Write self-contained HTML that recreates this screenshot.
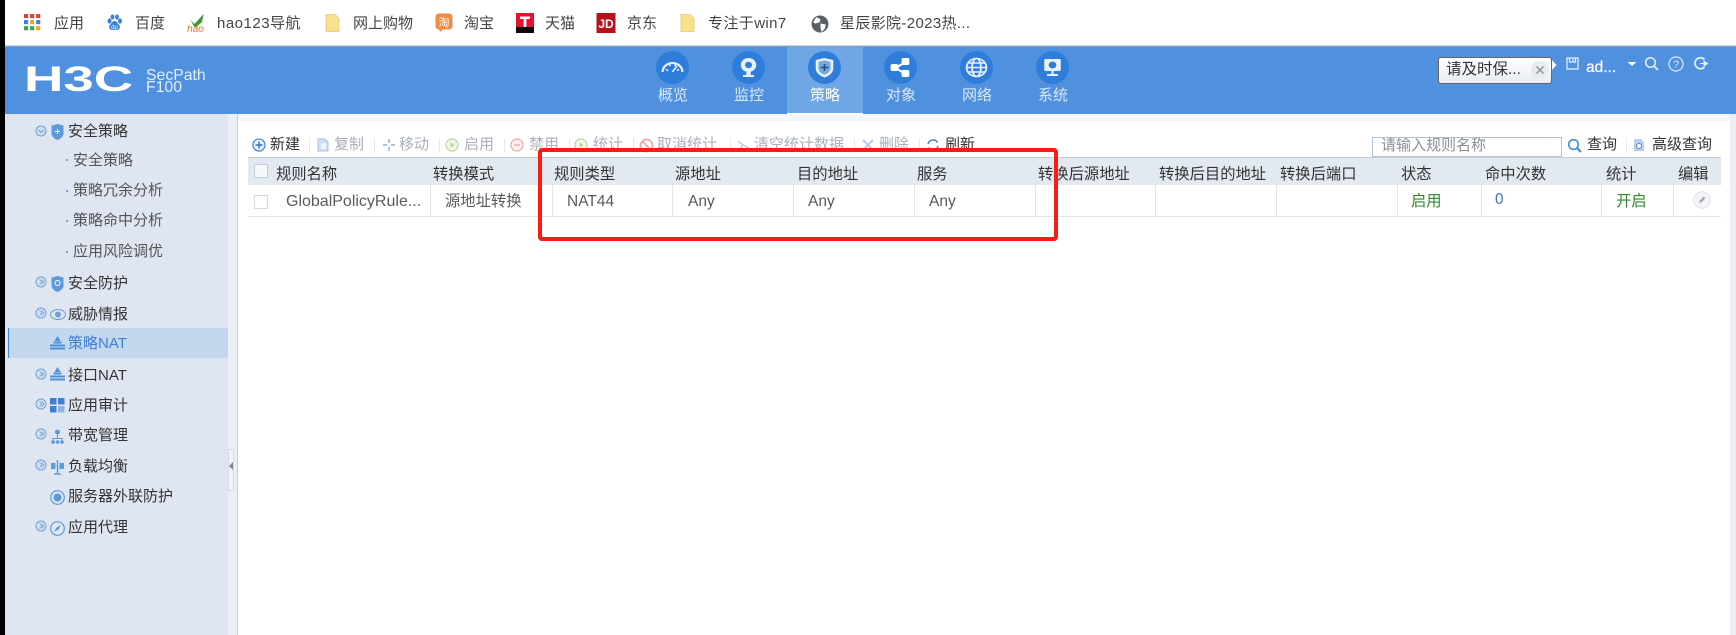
<!DOCTYPE html>
<html lang="zh"><head><meta charset="utf-8"><title>H3C SecPath F100</title>
<style>
html,body{margin:0;padding:0;width:1736px;height:635px;overflow:hidden;background:#fff}
body{position:relative;font-family:"Liberation Sans","Noto Sans CJK SC",sans-serif}
.a,.t,.s,svg{position:absolute}
.a{display:block}
.t{white-space:nowrap;line-height:20px;margin-top:-10px}
.bm{font-size:15px;color:#444;}
.n{font-size:15px;color:#dbe8f8;transform:translateX(-50%);top:96px}
.s{white-space:nowrap;line-height:20px;margin-top:-10px;font-size:15px;color:#333}
.sub{color:#555}
.tb{font-size:15px;color:#aab0b8;top:145px}
.h{font-size:15.3px;color:#333;top:175px}
.r{font-size:15.3px;color:#5a5a5a;top:202px}
.d{position:absolute;top:185px;height:31px;width:1px;background:#e2e5e9}
.sp{position:absolute;top:138px;height:15px;width:1px;background:#e6e8ea}
</style></head><body>
<div class="a" style="left:0;top:0;width:5px;height:635px;background:#000"></div>

<!-- bookmarks -->
<svg style="left:24px;top:14px" width="17" height="17" viewBox="0 0 14 14"><g><rect x="0" y="0" width="3.4" height="3.4" fill="#d8433a"/><rect x="5" y="0" width="3.4" height="3.4" fill="#d8433a"/><rect x="10" y="0" width="3.4" height="3.4" fill="#d8433a"/><rect x="0" y="5" width="3.4" height="3.4" fill="#3f7fe0"/><rect x="5" y="5" width="3.4" height="3.4" fill="#e8a822"/><rect x="10" y="5" width="3.4" height="3.4" fill="#3f7fe0"/><rect x="0" y="10" width="3.4" height="3.4" fill="#3da14f"/><rect x="5" y="10" width="3.4" height="3.4" fill="#3da14f"/><rect x="10" y="10" width="3.4" height="3.4" fill="#e8a822"/></g></svg>
<span class="t bm" style="left:54px;top:24px">应用</span>
<svg style="left:106px;top:14px" width="17" height="18" viewBox="0 0 16 18"><g fill="#3d80d8"><ellipse cx="3" cy="7" rx="2" ry="2.6"/><ellipse cx="6" cy="3" rx="1.9" ry="2.6"/><ellipse cx="10.5" cy="3" rx="1.9" ry="2.6"/><ellipse cx="13.5" cy="7" rx="2" ry="2.6"/><path d="M8 7c-2.5 0-3 2.6-4.6 4-1.5 1.4-.8 5 2 5 1 0 1.700-.4 2.600-.4s1.700.4 2.600.4c2.800 0 3.500-3.600 2-5C11 9.600 10.500 7 8 7z"/></g><text x="8" y="15" font-size="6" fill="#fff" text-anchor="middle" font-family="Liberation Sans">du</text></svg>
<span class="t bm" style="left:135px;top:24px">百度</span>
<svg style="left:186px;top:13px" width="20" height="20" viewBox="0 0 19 20"><path d="M4 7l4 4 9-10-1.500 8-7 6z" fill="#3f9a2e"/><text x="9" y="19" font-size="10" font-style="italic" fill="#e8761e" text-anchor="middle" font-family="Liberation Sans">hao</text></svg>
<span class="t bm" style="left:217px;top:24px;letter-spacing:.5px">hao123导航</span>
<svg style="left:325px;top:14px" width="15" height="18" viewBox="0 0 14 18"><path d="M.5.5h9l4 4v13H.5z" fill="#fbe08e" stroke="#e8cf86"/></svg>
<span class="t bm" style="left:353px;top:24px">网上购物</span>
<svg style="left:434px;top:13px" width="20" height="20" viewBox="0 0 18 20"><rect x="0.500" y="0.500" width="17" height="16" rx="3.500" fill="#f08b45"/><path d="M4 16l1 3 3-3z" fill="#f08b45"/><text x="9" y="13" font-size="11" fill="#fff" text-anchor="middle" font-family="Noto Sans CJK SC">淘</text></svg>
<span class="t bm" style="left:464px;top:24px">淘宝</span>
<svg style="left:515px;top:13px" width="20" height="20" viewBox="0 0 18 20"><rect width="18" height="14" fill="#e8102a"/><rect y="14" width="18" height="6" fill="#0a0a0a"/><path d="M4 3.500h10v2.500h-3.600v8H7.600V6H4z" fill="#fff"/></svg>
<span class="t bm" style="left:545px;top:24px">天猫</span>
<svg style="left:596px;top:13px" width="20" height="20" viewBox="0 0 19 20"><rect width="19" height="20" fill="#b5121b"/><text x="9.500" y="15" font-size="12" font-weight="bold" fill="#fff" text-anchor="middle" font-family="Liberation Sans">JD</text></svg>
<span class="t bm" style="left:627px;top:24px">京东</span>
<svg style="left:680px;top:14px" width="15" height="18" viewBox="0 0 14 18"><path d="M.5.5h9l4 4v13H.5z" fill="#fbe08e" stroke="#e8cf86"/></svg>
<span class="t bm" style="left:708px;top:24px;letter-spacing:.4px">专注于win7</span>
<svg style="left:811px;top:15px" width="18" height="18" viewBox="0 0 17 17"><circle cx="8.500" cy="8.500" r="8" fill="#5b5f66"/><path d="M5 2l4 2-1 3-4 1-2-1zM9 8l5 1-1 4-3 3-1-4z" fill="#fff"/></svg>
<span class="t bm" style="left:840px;top:24px;letter-spacing:.35px">星辰影院-2023热...</span>

<!-- header -->
<div class="a" style="left:5px;top:45px;width:1731px;height:1px;background:#c5d5e8"></div>
<div class="a" style="left:5px;top:46px;width:1731px;height:1px;background:#7f9fc8"></div>
<div class="a" style="left:5px;top:47px;width:1731px;height:67px;background:#4f91de"></div>
<div class="a" style="left:787px;top:47px;width:76px;height:66px;background:#6fa6e5"></div>
<div class="a" style="left:787px;top:113px;width:76px;height:3px;background:#fff"></div>

<span class="t" style="left:24px;top:80px;margin-top:-21px;line-height:42px;font-size:35px;font-weight:bold;color:#fff;transform:scaleX(1.56);transform-origin:left center">H3C</span>
<span class="t" style="left:146px;top:76px;font-size:15.800px;color:#e4eefa">SecPath</span>
<span class="t" style="left:146px;top:88px;font-size:15.800px;color:#e4eefa">F100</span>

<!-- nav icons -->
<svg style="left:656px;top:51px" width="33" height="33" viewBox="0 0 30 33" preserveAspectRatio="none"><ellipse cx="15" cy="16.500" rx="15" ry="16.500" fill="#2f7ddb"/><path d="M6 21a9 9 0 1 1 18 0" fill="none" stroke="#e8f1fb" stroke-width="2"/><path d="M9 18.500l2 1M12 13l1 2M18 13l-1 2M21 18.500l-2 1M15 21l4-6" stroke="#e8f1fb" stroke-width="1.500" fill="none"/></svg>
<svg style="left:732px;top:51px" width="33" height="33" viewBox="0 0 30 33" preserveAspectRatio="none"><ellipse cx="15" cy="16.500" rx="15" ry="16.500" fill="#2f7ddb"/><circle cx="15" cy="14" r="7" fill="#e8f1fb"/><circle cx="15" cy="14" r="3.200" fill="#2f7ddb"/><path d="M10 24h10v2H10z" fill="#e8f1fb"/><path d="M13 21h4v3h-4z" fill="#e8f1fb"/></svg>
<svg style="left:808px;top:51px" width="33" height="33" viewBox="0 0 30 33" preserveAspectRatio="none"><ellipse cx="15" cy="16.500" rx="15" ry="16.500" fill="#2f7ddb"/><path d="M15 7l8 2v8c0 5-4 8-8 9.500-4-1.500-8-4.500-8-9.500V9z" fill="#e8f1fb"/><path d="M15 9.500l5.500 1.300v6.200c0 3.500-2.700 5.700-5.500 6.800-2.800-1.100-5.500-3.300-5.500-6.800v-6.200z" fill="#7aa9df"/><path d="M15 13v7M11.500 16.500h7" stroke="#1c4f8f" stroke-width="1.500"/></svg>
<svg style="left:884px;top:51px" width="33" height="33" viewBox="0 0 30 33" preserveAspectRatio="none"><ellipse cx="15" cy="16.500" rx="15" ry="16.500" fill="#2f7ddb"/><path d="M19 11l-8 6 8 6" fill="none" stroke="#fff" stroke-width="2"/><rect x="16" y="7" width="7" height="7" rx="1.500" fill="#fff"/><rect x="6" y="13" width="7" height="7" rx="1.500" fill="#fff"/><rect x="16" y="19" width="7" height="7" rx="1.500" fill="#fff"/></svg>
<svg style="left:960px;top:51px" width="33" height="33" viewBox="0 0 30 33" preserveAspectRatio="none"><ellipse cx="15" cy="16.500" rx="15" ry="16.500" fill="#2f7ddb"/><g fill="none" stroke="#e8f1fb" stroke-width="1.600"><circle cx="15" cy="16.500" r="9"/><ellipse cx="15" cy="16.500" rx="4" ry="9"/><path d="M6 16.500h18M7.500 12h15M7.500 21h15"/></g></svg>
<svg style="left:1036px;top:51px" width="33" height="33" viewBox="0 0 30 33" preserveAspectRatio="none"><ellipse cx="15" cy="16.500" rx="15" ry="16.500" fill="#2f7ddb"/><rect x="7.500" y="8" width="15" height="12" rx="1" fill="#e8f1fb"/><circle cx="15" cy="14" r="3.500" fill="#2f7ddb"/><path d="M15 20v3M10 24h10" stroke="#e8f1fb" stroke-width="2"/></svg>
<span class="t n" style="left:673px">概览</span>
<span class="t n" style="left:749px">监控</span>
<span class="t n" style="left:825px;color:#fff">策略</span>
<span class="t n" style="left:901px">对象</span>
<span class="t n" style="left:977px">网络</span>
<span class="t n" style="left:1053px">系统</span>

<!-- tooltip & user -->
<div class="a" style="left:1438px;top:57px;width:112px;height:25px;background:linear-gradient(#fff,#e9ecf4);border:1px solid #6b6460;border-radius:3px"></div>
<svg style="left:1552px;top:60px" width="5" height="10" viewBox="0 0 5 10"><path d="M0 0l4.500 5L0 10z" fill="#f4f6fb"/></svg>
<span class="t" style="left:1446px;top:70px;font-size:15.500px;color:#333">请及时保...</span>
<div class="a" style="left:1531px;top:61px;width:18px;height:18px;border-radius:50%;background:#e8eaf0"></div>
<svg style="left:1535px;top:65px" width="10" height="10" viewBox="0 0 10 10"><path d="M1.500 1.500l7 7M8.500 1.500l-7 7" stroke="#8d929b" stroke-width="1.500"/></svg>
<svg style="left:1566px;top:57px" width="13" height="13" viewBox="0 0 13 13"><path d="M1 1h11v11H1zM3.500 1v4h6V1M7 2v2" fill="none" stroke="#eaf2fc" stroke-width="1.200"/></svg>
<span class="t" style="left:1586px;top:68px;font-size:15.500px;color:#fff;-webkit-text-stroke:.2px #fff">ad...</span>
<svg style="left:1627px;top:62px" width="10" height="4" viewBox="0 0 11 5"><path d="M0 0h11L5.500 5z" fill="#fff"/></svg>
<svg style="left:1644px;top:56px" width="15" height="15" viewBox="0 0 15 15"><circle cx="6.500" cy="6.500" r="4.800" fill="none" stroke="#e6f0fb" stroke-width="1.500"/><path d="M10 10l4 4" stroke="#e6f0fb" stroke-width="1.800"/></svg>
<svg style="left:1668px;top:56px" width="16" height="16" viewBox="0 0 16 16"><circle cx="8" cy="8" r="7" fill="none" stroke="#dbe8f8" stroke-width="1.200"/><text x="8" y="12" font-size="11" fill="#dbe8f8" text-anchor="middle" font-family="Liberation Sans">?</text></svg>
<svg style="left:1692px;top:56px" width="17" height="15" viewBox="0 0 17 15"><path d="M12.500 3.500A5.500 5.500 0 1 0 12.500 11" fill="none" stroke="#e6f0fb" stroke-width="1.700"/><path d="M8 7.500h5M12 5l3.500 2.500L12 10z" fill="#e6f0fb" stroke="#e6f0fb" stroke-width="1"/></svg>

<!-- sidebar -->
<div class="a" style="left:5px;top:114px;width:223px;height:521px;background:#e0e6f1"></div>
<div class="a" style="left:228px;top:114px;width:9px;height:521px;background:#eaeef5"></div>
<div class="a" style="left:237px;top:114px;width:1px;height:521px;background:#c9ced6"></div>
<div class="a" style="left:1730px;top:114px;width:6px;height:521px;background:#eceef2"></div>
<div class="a" style="left:238px;top:114px;width:1492px;height:7px;background:#f3f5f8"></div>
<div class="a" style="left:8px;top:328px;width:220px;height:30px;background:#c3d7ef"></div>
<div class="a" style="left:8px;top:328px;width:1px;height:30px;background:#3f86d8"></div>
<div class="a" style="left:228px;top:449px;width:4px;height:40px;background:#f2f4f8;border:1px solid #d5d9e0"></div>
<svg style="left:229px;top:462px" width="4" height="8" viewBox="0 0 4 8"><path d="M4 0v8L0 4z" fill="#7f8792"/></svg>

<svg width="0" height="0" style="left:0;top:0"><defs>
<g id="ex"><circle cx="6" cy="6" r="5" fill="#d3e0f0" stroke="#6ba0d8" stroke-width="1"/><path d="M4.500 3.500L7 6 4.500 8.500M6.500 3.500L9 6 6.500 8.500" fill="none" stroke="#6ba0d8" stroke-width=".8"/></g>
<g id="nat"><path d="M7.500 0l3 5h-6z" fill="#4d8fd8"/><rect x="3.500" y="5.500" width="8" height="2" fill="#4d8fd8"/><rect x="0" y="8.500" width="15" height="2" fill="#4d8fd8"/><rect x="0" y="11.500" width="15" height="2" fill="#4d8fd8"/></g>
</defs></svg>

<svg style="left:35px;top:125px" width="12" height="12"><circle cx="6" cy="6" r="5" fill="#d3e0f0" stroke="#6ba0d8"/><path d="M3.500 5L6 7.500 8.500 5" fill="none" stroke="#6ba0d8"/></svg>
<svg style="left:51px;top:124px" width="13" height="16" viewBox="0 0 13 16"><path d="M.5 1.500L6.500 0l6 1.500v8c0 3-3 5.500-6 6.500-3-1-6-3.500-6-6.500z" fill="#5d9ad9"/><path d="M6.500 5v5M4 7.500h5" stroke="#fff"/></svg>
<span class="s" style="left:68px;top:132px">安全策略</span>
<span class="s sub" style="left:73px;top:161px">安全策略</span>
<span class="s sub" style="left:73px;top:191px">策略冗余分析</span>
<span class="s sub" style="left:73px;top:221px">策略命中分析</span>
<span class="s sub" style="left:73px;top:252px">应用风险调优</span>
<div class="a" style="left:66px;top:159px;width:2px;height:2px;background:#8aa0b8"></div>
<div class="a" style="left:66px;top:190px;width:2px;height:2px;background:#8aa0b8"></div>
<div class="a" style="left:66px;top:220px;width:2px;height:2px;background:#8aa0b8"></div>
<div class="a" style="left:66px;top:251px;width:2px;height:2px;background:#8aa0b8"></div>

<svg style="left:35px;top:276px" width="12" height="12"><use href="#ex"/></svg>
<svg style="left:51px;top:276px" width="13" height="16" viewBox="0 0 13 16"><path d="M.5 1.500L6.500 0l6 1.500v8c0 3-3 5.500-6 6.500-3-1-6-3.500-6-6.500z" fill="#5d9ad9"/><circle cx="6.500" cy="7" r="2.500" fill="none" stroke="#fff"/></svg>
<span class="s" style="left:68px;top:284px">安全防护</span>

<svg style="left:35px;top:307px" width="12" height="12"><use href="#ex"/></svg>
<svg style="left:50px;top:309px" width="16" height="11" viewBox="0 0 16 11"><ellipse cx="8" cy="5.500" rx="7.500" ry="5" fill="none" stroke="#6f9fd4"/><circle cx="8" cy="5.500" r="3" fill="#6f9fd4"/></svg>
<span class="s" style="left:68px;top:315px">威胁情报</span>

<svg style="left:50px;top:336px" width="15" height="14"><use href="#nat"/></svg>
<span class="s" style="left:68px;top:344px;color:#3f7fd0">策略NAT</span>

<svg style="left:35px;top:368px" width="12" height="12"><use href="#ex"/></svg>
<svg style="left:50px;top:367px" width="15" height="14"><use href="#nat"/></svg>
<span class="s" style="left:68px;top:376px">接口NAT</span>

<svg style="left:35px;top:398px" width="12" height="12"><use href="#ex"/></svg>
<svg style="left:50px;top:398px" width="15" height="15" viewBox="0 0 15 15"><rect width="6.500" height="6.500" fill="#3f7fd0"/><rect x="8" width="6.500" height="6.500" fill="#3f7fd0"/><rect y="8" width="6.500" height="6.500" fill="#3f7fd0"/><rect x="8" y="8" width="6.500" height="6.500" fill="#8fb4e0"/></svg>
<span class="s" style="left:68px;top:406px">应用审计</span>

<svg style="left:35px;top:428px" width="12" height="12"><use href="#ex"/></svg>
<svg style="left:51px;top:429px" width="13" height="15" viewBox="0 0 13 15"><circle cx="6.500" cy="3" r="2.500" fill="#5d9ad9"/><path d="M6.500 5v4M2 13v-3.500h9V13" fill="none" stroke="#5d9ad9"/><circle cx="2" cy="13" r="1.800" fill="#5d9ad9"/><circle cx="6.500" cy="13" r="1.800" fill="#5d9ad9"/><circle cx="11" cy="13" r="1.800" fill="#5d9ad9"/></svg>
<span class="s" style="left:68px;top:436px">带宽管理</span>

<svg style="left:35px;top:459px" width="12" height="12"><use href="#ex"/></svg>
<svg style="left:51px;top:460px" width="13" height="15" viewBox="0 0 13 15"><path d="M6.500 0v14M3 14h7" stroke="#5d9ad9" stroke-width="1.500"/><rect x="0" y="3" width="4.500" height="6" fill="#5d9ad9"/><rect x="8.500" y="3" width="4.500" height="6" fill="#5d9ad9"/></svg>
<span class="s" style="left:68px;top:467px">负载均衡</span>

<svg style="left:50px;top:490px" width="15" height="15" viewBox="0 0 15 15"><circle cx="7.500" cy="7.500" r="6.800" fill="none" stroke="#5d9ad9" stroke-width="1.200"/><circle cx="7.500" cy="7.500" r="4" fill="#5d9ad9"/></svg>
<span class="s" style="left:68px;top:497px">服务器外联防护</span>

<svg style="left:35px;top:520px" width="12" height="12"><use href="#ex"/></svg>
<svg style="left:50px;top:521px" width="15" height="15" viewBox="0 0 15 15"><circle cx="7.500" cy="7.500" r="6.800" fill="none" stroke="#5d9ad9" stroke-width="1.200"/><path d="M11 4L8.500 8.500 4 11l2.500-4.500z" fill="#5d9ad9"/></svg>
<span class="s" style="left:68px;top:528px">应用代理</span>

<!-- toolbar -->
<svg style="left:252px;top:138px" width="14" height="14" viewBox="0 0 14 14"><circle cx="7" cy="7" r="6" fill="#eaf2fb" stroke="#4a8ad6" stroke-width="1.300"/><path d="M7 3.500v7M3.500 7h7" stroke="#2f72c4" stroke-width="1.500"/></svg>
<span class="t tb" style="left:270px;color:#333">新建</span>
<div class="sp" style="left:309px"></div>
<svg style="left:317px;top:138px" width="13" height="14" viewBox="0 0 13 14"><path d="M1 1h7l3 3v9H1z" fill="#cfdef0" stroke="#a9c2de"/><rect x="4" y="5" width="5" height="6" fill="#eef4fb"/></svg>
<span class="t tb" style="left:334px">复制</span>
<div class="sp" style="left:374px"></div>
<svg style="left:382px;top:138px" width="14" height="14" viewBox="0 0 14 14"><path d="M7 1v4M7 9v4M1 7h4M9 7h4" stroke="#a9c6e6" stroke-width="2"/></svg>
<span class="t tb" style="left:399px">移动</span>
<div class="sp" style="left:439px"></div>
<svg style="left:445px;top:138px" width="14" height="14" viewBox="0 0 14 14"><circle cx="7" cy="7" r="6" fill="#f4f8ea" stroke="#bcd49a" stroke-width="1.200"/><path d="M5.500 4.300L9.700 7l-4.200 2.700z" fill="#bcd49a"/></svg>
<span class="t tb" style="left:464px">启用</span>
<div class="sp" style="left:504px"></div>
<svg style="left:510px;top:138px" width="14" height="14" viewBox="0 0 14 14"><circle cx="7" cy="7" r="6" fill="#fdf2f0" stroke="#eeaaa4" stroke-width="1.200"/><path d="M4 7h6" stroke="#eeaaa4" stroke-width="1.500"/></svg>
<span class="t tb" style="left:529px">禁用</span>
<div class="sp" style="left:569px"></div>
<svg style="left:574px;top:138px" width="14" height="14" viewBox="0 0 14 14"><circle cx="7" cy="7" r="6" fill="#f4f8ea" stroke="#bcd49a" stroke-width="1.200"/><path d="M5.500 4.300L9.700 7l-4.200 2.700z" fill="#bcd49a"/></svg>
<span class="t tb" style="left:593px">统计</span>
<div class="sp" style="left:633px"></div>
<svg style="left:639px;top:138px" width="15" height="15" viewBox="0 0 15 15"><circle cx="7.500" cy="7.500" r="6" fill="none" stroke="#eeaaa4" stroke-width="1.800"/><path d="M3.500 3.500l8 8" stroke="#eeaaa4" stroke-width="1.800"/></svg>
<span class="t tb" style="left:657px">取消统计</span>
<div class="sp" style="left:730px"></div>
<svg style="left:736px;top:138px" width="14" height="14" viewBox="0 0 14 14"><path d="M2 3l5 4-3 4M7 7l6 3" stroke="#b8cde4" stroke-width="1.500" fill="none"/></svg>
<span class="t tb" style="left:754px">清空统计数据</span>
<div class="sp" style="left:854px"></div>
<svg style="left:862px;top:139px" width="12" height="12" viewBox="0 0 12 12"><path d="M1 1l10 10M11 1L1 11" stroke="#b8cde4" stroke-width="2"/></svg>
<span class="t tb" style="left:879px">删除</span>
<div class="sp" style="left:919px"></div>
<svg style="left:926px;top:138px" width="14" height="14" viewBox="0 0 14 14"><path d="M2 6a5.200 5.200 0 0 1 9.500-1.500M12 8a5.200 5.200 0 0 1-9.500 1.500" fill="none" stroke="#3f7fc8" stroke-width="1.500"/></svg>
<span class="t tb" style="left:945px;color:#333">刷新</span>

<div class="a" style="left:1372px;top:137px;width:188px;height:18px;border:1px solid #b4c2d6;background:#fff"></div>
<span class="t" style="left:1381px;top:146px;font-size:15px;color:#8a8f96">请输入规则名称</span>
<svg style="left:1567px;top:138px" width="15" height="15" viewBox="0 0 15 15"><circle cx="6.500" cy="6.500" r="4.800" fill="none" stroke="#4a8ad6" stroke-width="1.600"/><path d="M10 10l4 4" stroke="#4a8ad6" stroke-width="2"/></svg>
<span class="t tb" style="left:1587px;color:#333">查询</span>
<div class="sp" style="left:1626px"></div>
<svg style="left:1633px;top:138px" width="13" height="14" viewBox="0 0 13 14"><path d="M1 1h7l3 3v9H1z" fill="#b9d0ea"/><circle cx="6" cy="8" r="2.500" fill="#fff" stroke="#4a8ad6"/></svg>
<span class="t tb" style="left:1652px;color:#333">高级查询</span>

<!-- table -->
<div class="a" style="left:248px;top:157px;width:1473px;height:1px;background:#c6cbd1"></div>
<div class="a" style="left:248px;top:158px;width:1473px;height:27px;background:#e3e9f0"></div>
<div class="a" style="left:248px;top:216px;width:1473px;height:1px;background:#e2e5e9"></div>
<div class="d" style="left:430px"></div><div class="d" style="left:552px"></div><div class="d" style="left:672px"></div><div class="d" style="left:793px"></div><div class="d" style="left:914px"></div><div class="d" style="left:1035px"></div><div class="d" style="left:1155px"></div><div class="d" style="left:1276px"></div><div class="d" style="left:1397px"></div><div class="d" style="left:1481px"></div><div class="d" style="left:1601px"></div><div class="d" style="left:1673px"></div>
<div class="a" style="left:254px;top:164px;width:12px;height:12px;border:1px solid #c6ccd3;background:#f7f8fa"></div>
<div class="a" style="left:254px;top:195px;width:12px;height:12px;border:1px solid #d6dade;background:#fff"></div>

<span class="t h" style="left:276px">规则名称</span>
<span class="t h" style="left:433px">转换模式</span>
<span class="t h" style="left:554px">规则类型</span>
<span class="t h" style="left:675px">源地址</span>
<span class="t h" style="left:797px">目的地址</span>
<span class="t h" style="left:917px">服务</span>
<span class="t h" style="left:1038px">转换后源地址</span>
<span class="t h" style="left:1159px">转换后目的地址</span>
<span class="t h" style="left:1280px">转换后端口</span>
<span class="t h" style="left:1401px">状态</span>
<span class="t h" style="left:1485px">命中次数</span>
<span class="t h" style="left:1606px">统计</span>
<span class="t h" style="left:1678px">编辑</span>

<span class="t r" style="left:286px;font-size:16px">GlobalPolicyRule...</span>
<span class="t r" style="left:445px">源地址转换</span>
<span class="t r" style="left:567px;font-size:15.500px">NAT44</span>
<span class="t r" style="left:688px;font-size:15.500px">Any</span>
<span class="t r" style="left:808px;font-size:15.500px">Any</span>
<span class="t r" style="left:929px;font-size:15.500px">Any</span>
<span class="t r" style="left:1411px;color:#2f8a2a">启用</span>
<span class="t r" style="left:1495px;color:#3a6fc0;top:200px">0</span>
<span class="t r" style="left:1616px;color:#2f8a2a">开启</span>
<svg style="left:1693px;top:191px" width="18" height="18" viewBox="0 0 18 18"><circle cx="9" cy="9" r="8.300" fill="#f3f4f8" stroke="#dfe2e8"/><path d="M6 12l.7-2.500 4-4 1.800 1.800-4 4z" fill="#a3a9b4"/></svg>

<!-- red annotation -->
<div class="a" style="left:538px;top:148px;width:512px;height:85px;border:4px solid #fa1c14;border-radius:4px"></div>
</body></html>
